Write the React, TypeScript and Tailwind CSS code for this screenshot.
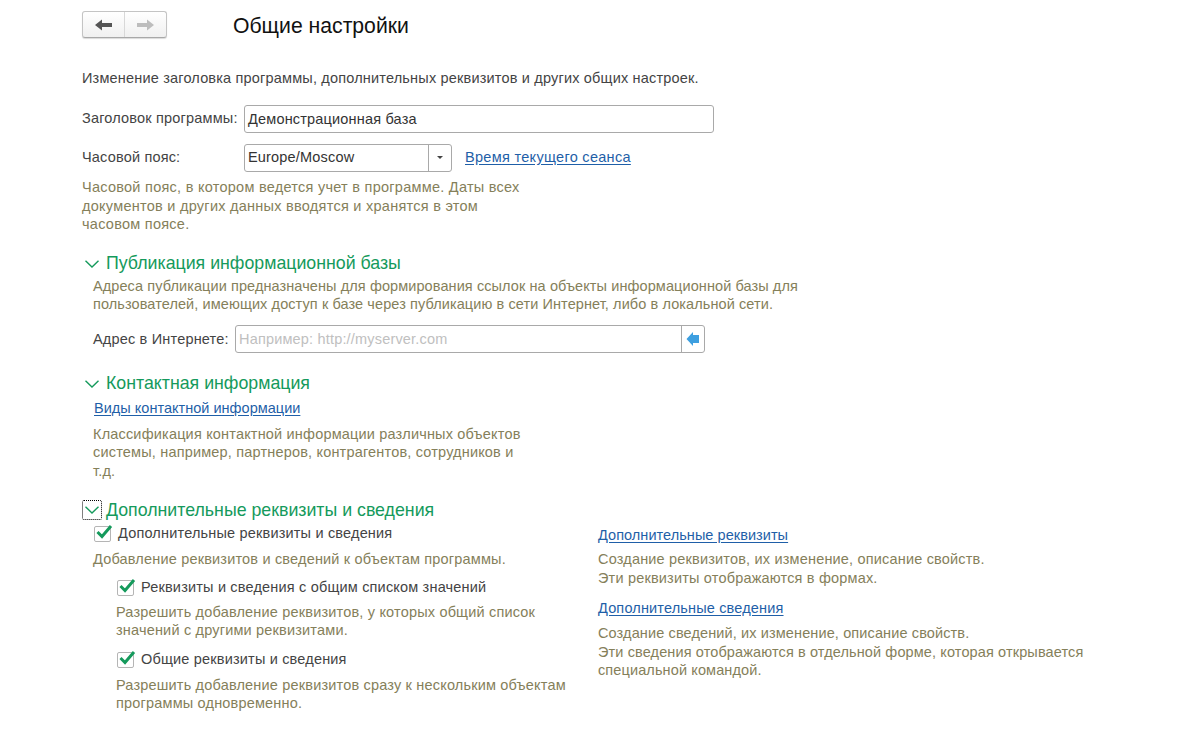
const Help = ({ children, className = '', tracking = 'tracking-[0.18px]' }: { children: React.ReactNode; className?: string; tracking?: string }) => (
  <p className={`text-[14.5px] leading-[18.5px] text-[#85805a] ${tracking} ${className}`}>{children}</p>
);

const Section = ({ title, focused }: { title: string; focused?: boolean }) => (
  <div className="flex items-center h-[24px] text-[17.75px] text-[#159a5c]">
    <span className={`w-[20px] h-[20px] flex items-center justify-center mr-[4px] ${focused ? 'border border-dotted border-black rounded-[2px]' : ''}`}>
      <svg width="14" height="8" viewBox="0 0 14 8" fill="none" stroke="#159a5c" strokeWidth="1.4">
        <polyline points="0.5,0.7 7,7 13.5,0.7" />
      </svg>
    </span>
    {title}
  </div>
);

const Checkbox = ({ label }: { label: string }) => (
  <div className="ml-[1px] flex items-center h-[20px] text-[14.5px] tracking-[0.18px] text-[#444]">
    <span className="relative w-[17px] h-[16px] mr-[7px] border border-[#b5b5b5] rounded-[2px] bg-white">
      <svg width="18" height="16" viewBox="0 0 18 16" fill="none" stroke="#159a5c" strokeWidth="3" className="absolute -top-[3px] left-0">
        <polyline points="2.5,8 7,12.5 16,2" />
      </svg>
    </span>
    {label}
  </div>
);

const DocLink = ({ children, className = 'tracking-[0.25px]' }: { children: React.ReactNode; className?: string }) => (
  <a href="#" className={`text-[14.5px] text-[#1f5fa8] underline underline-offset-2 ${className}`}>{children}</a>
);

export default function App() {
  return (
    <div className="w-[1200px] h-[731px] overflow-hidden bg-white pl-[82px] pt-[11px] font-['Liberation_Sans',Arial,sans-serif]">
      {/* Header */}
      <div className="flex items-center h-[27px]">
        <div className="flex w-[85px] h-[27px] rounded-[3px] border border-[#c4c4c4] border-b-[#a8a8a8] bg-gradient-to-b from-white to-[#f0f0f0] shadow-[0_1px_1px_rgba(0,0,0,0.15)]">
          <span className="flex-1 flex items-center justify-center border-r border-[#d8d8d8]">
            <svg width="17" height="12" viewBox="0 0 17 12"><path d="M0 6 L7 0.5 V4 H17 V8 H7 V11.5 Z" fill="#555" /></svg>
          </span>
          <span className="w-[41px] flex items-center justify-center">
            <svg width="17" height="12" viewBox="0 0 17 12"><path d="M17 6 L10 0.5 V4 H0 V8 H10 V11.5 Z" fill="#bdbdbd" /></svg>
          </span>
        </div>
        <h1 className="ml-[66px] pt-[2px] text-[21.2px] text-[#111]">Общие настройки</h1>
      </div>

      <p className="mt-[31px] text-[14.5px] tracking-[0.18px] leading-[18px] text-[#444]">
        Изменение заголовка программы, дополнительных реквизитов и других общих настроек.
      </p>

      {/* Title and timezone */}
      <div className="mt-[18px] flex items-center h-[27px] text-[14.5px] tracking-[0.18px] text-[#444]">
        <span className="w-[162px]">Заголовок программы:</span>
        <div className="w-[470px] h-[28px] flex items-center pl-[3px] pt-[2px] border border-[#a9a9a9] rounded-[3px] text-[#333]">Демонстрационная база</div>
      </div>
      <div className="mt-[12px] flex items-center h-[27px] text-[14.5px] tracking-[0.18px] text-[#444]">
        <span className="w-[162px]">Часовой пояс:</span>
        <div className="w-[208px] h-[28px] flex border border-[#a9a9a9] rounded-[3px] text-[#333]">
          <span className="flex-1 flex items-center pl-[3px] border-r border-[#a9a9a9]">Europe/Moscow</span>
          <span className="w-[22px] flex items-center justify-center">
            <span className="border-x-[3px] border-t-[3px] border-x-transparent border-t-[#444]" />
          </span>
        </div>
        <span className="ml-[13px]"><DocLink className="tracking-[0.3px]">Время текущего сеанса</DocLink></span>
      </div>
      <Help className="mt-[7px] w-[445px]" tracking="tracking-[0.26px]">
        Часовой пояс, в котором ведется учет в программе. Даты всех документов и других данных вводятся и хранятся в этом часовом поясе.
      </Help>

      {/* Publication */}
      <div className="mt-[18px]"><Section title="Публикация информационной базы" /></div>
      <div className="pl-[11px]">
        <Help className="mt-[1px] w-[730px]" tracking="tracking-[0.09px]">
          Адреса публикации предназначены для формирования ссылок на объекты информационной базы для пользователей, имеющих доступ к базе через публикацию в сети Интернет, либо в локальной сети.
        </Help>
        <div className="mt-[12px] flex items-center h-[27px] text-[14.5px] tracking-[0.18px] text-[#444]">
          <span className="w-[142px] pt-[1px]">Адрес в Интернете:</span>
          <div className="w-[470px] h-[28px] flex border border-[#a9a9a9] rounded-[3px]">
            <span className="flex-1 flex items-center pl-[3px] pt-[1px] border-r border-[#a9a9a9] text-[#c0c0c0]">Например: http://myserver.com</span>
            <span className="w-[22px] flex items-center justify-center">
              <svg width="14" height="16" viewBox="0 0 14 16"><path d="M0.5 8 L7 1 V4 H13 V12 H7 V15 Z" fill="#3d9fe0" /></svg>
            </span>
          </div>
        </div>
      </div>

      {/* Contact info */}
      <div className="mt-[19px]"><Section title="Контактная информация" /></div>
      <div className="pl-[11px]">
        <div className="pl-[1px]"><DocLink className="tracking-[0.02px]">Виды контактной информации</DocLink></div>
        <Help className="mt-[5px] w-[432px]">
          Классификация контактной информации различных объектов системы, например, партнеров, контрагентов, сотрудников и т.д.
        </Help>
      </div>

      {/* Extra attributes */}
      <div className="mt-[18px]"><Section title="Дополнительные реквизиты и сведения" focused /></div>
      <div className="flex">
        <div className="w-[516px] pl-[11px]">
          <div className="mt-[2px]"><Checkbox label="Дополнительные реквизиты и сведения" /></div>
          <Help className="mt-[6px]">Добавление реквизитов и сведений к объектам программы.</Help>
          <div className="pl-[23px]">
            <div className="mt-[9px]"><Checkbox label="Реквизиты и сведения с общим списком значений" /></div>
            <Help className="mt-[5px] w-[440px]">Разрешить добавление реквизитов, у которых общий список значений с другими реквизитами.</Help>
            <div className="mt-[10px]"><Checkbox label="Общие реквизиты и сведения" /></div>
            <Help className="mt-[6px] w-[460px]">Разрешить добавление реквизитов сразу к нескольким объектам программы одновременно.</Help>
          </div>
        </div>
        <div className="w-[500px]">
          <div className="mt-[1px] h-[20px]"><DocLink className="tracking-[0.05px]">Дополнительные реквизиты</DocLink></div>
          <Help className="mt-[7px]">Создание реквизитов, их изменение, описание свойств.<br />Эти реквизиты отображаются в формах.</Help>
          <div className="mt-[9px] h-[20px]"><DocLink className="tracking-[0.16px]">Дополнительные сведения</DocLink></div>
          <Help className="mt-[8px]" tracking="tracking-[0.12px]">Создание сведений, их изменение, описание свойств.<br />Эти сведения отображаются в отдельной форме, которая открывается специальной командой.</Help>
        </div>
      </div>
    </div>
  );
}
